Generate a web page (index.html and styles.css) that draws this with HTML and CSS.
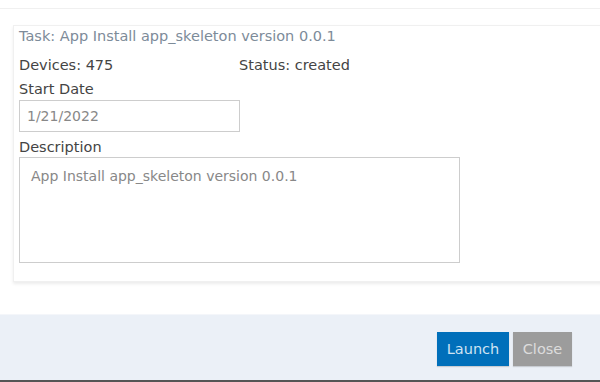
FILE: index.html
```html
<!DOCTYPE html>
<html lang="en">
<head>
    <meta charset="UTF-8">
    <title>Launch Task</title>
    <link rel="stylesheet" href="styles.css">
</head>
<body>
    <div class="modal">
        <div class="modal-header"></div>
        <div class="modal-body">
            <div class="card">
                <div class="task-title">Task: App Install app_skeleton version 0.0.1</div>
                <div class="info-row">
                    <span class="info-col">Devices: 475</span>
                    <span>Status: created</span>
                </div>
                <label class="field-label">Start Date</label>
                <input class="date-input" type="text" value="1/21/2022">
                <label class="field-label desc-label">Description</label>
                <textarea class="desc-input">App Install app_skeleton version 0.0.1</textarea>
            </div>
        </div>
        <div class="modal-footer">
            <button class="btn btn-primary">Launch</button>
            <button class="btn btn-disabled">Close</button>
        </div>
    </div>
</body>
</html>
```
FILE: styles.css
```css
* {
    margin: 0;
    padding: 0;
    box-sizing: border-box;
}

body {
    font-family: 'DejaVu Sans', Verdana, sans-serif;
    font-size: 14.5px;
    color: #444;
    background: white;
    overflow: hidden;
}

.modal {
    width: 600px;
    height: 382px;
    display: flex;
    flex-direction: column;
}

.modal-header {
    height: 9px;
    border-bottom: 1px solid #f0f0f0;
}

.modal-body {
    padding: 16px 0 0 13px;
    height: 305px;
}

.card {
    width: 600px;
    border: 1px solid #f0f0f0;
    border-right: none;
    box-shadow: 0 2px 3px rgba(0, 0, 0, 0.08);
    padding: 0 0 18px 5px;
}

.task-title {
    line-height: 20px;
    color: #7d8b99;
}

.info-row {
    display: flex;
    line-height: 20px;
    margin-top: 9px;
}

.info-col {
    width: 220px;
}

.field-label {
    display: block;
    line-height: 20px;
    margin-top: 4px;
}

.desc-label {
    margin-top: 5px;
}

.date-input,
.desc-input {
    display: block;
    font-family: inherit;
    font-size: 14px;
    color: #888;
    border: 1px solid #cdcdcd;
    background: white;
    outline: none;
}

.date-input {
    width: 221px;
    height: 32px;
    margin-top: 1px;
    padding: 0 7px;
}

.desc-input {
    width: 441px;
    height: 106px;
    padding: 8px 11px;
    line-height: 20px;
    resize: none;
}

.modal-footer {
    flex: 1;
    background: #ebf0f7;
    border-top: 1px solid #f4f6fa;
    border-bottom: 2px solid #555;
    display: flex;
    justify-content: flex-end;
    align-items: flex-start;
    gap: 4px;
    padding: 17px 28px 0 0;
}

.btn {
    font-family: inherit;
    font-size: 14.5px;
    height: 34px;
    border: none;
    box-shadow: 0 1px 1px rgba(0, 0, 0, 0.15);
    cursor: pointer;
}

.btn-primary {
    width: 72px;
    background: #006fba;
    color: #cfe3f3;
}

.btn-disabled {
    width: 59px;
    background: #9c9c9c;
    color: #dcdcdc;
}
```
